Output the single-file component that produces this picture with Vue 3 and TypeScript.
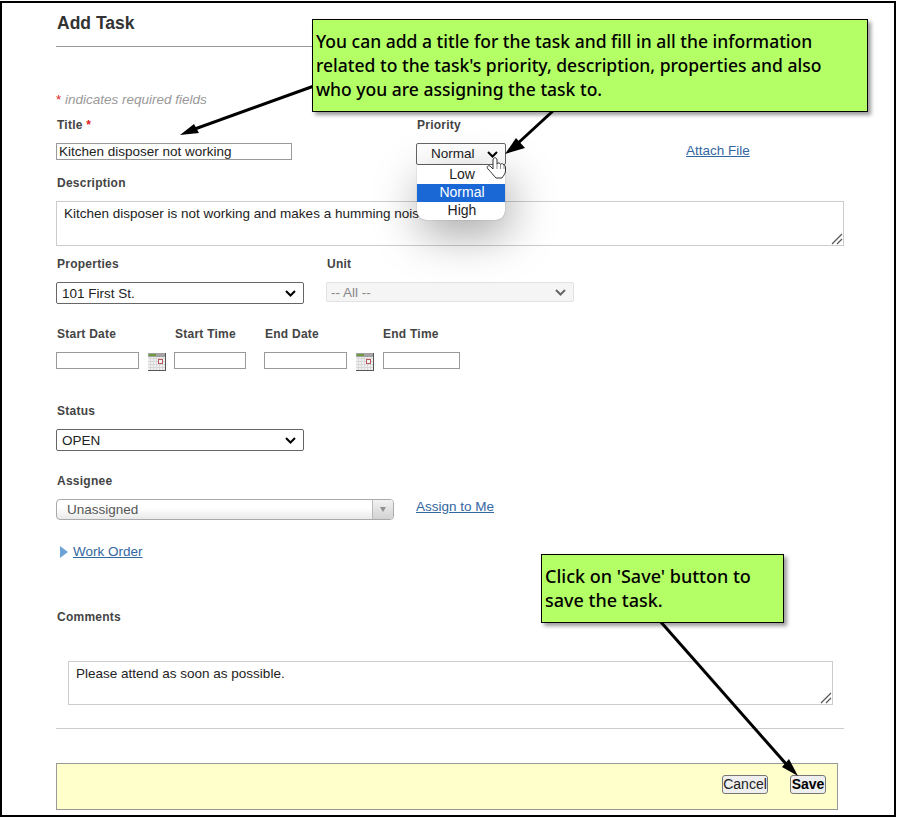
<script setup lang="ts">
const dateFields = [
  { label: 'Start Date', width: 83, calendar: true },
  { label: 'Start Time', width: 72, calendar: false },
  { label: 'End Date', width: 83, calendar: true },
  { label: 'End Time', width: 77, calendar: false },
]
const gridCells = [2, 5, 8, 11, 14]
</script>

<template>
  <div class="page">
    <main class="frame">
      <h1 class="title">Add Task</h1>
      <hr class="rule-dark" />
      <p class="required"><span class="star">*</span> indicates required fields</p>

      <section class="top-row">
        <div class="title-col">
          <label class="lab">Title <span class="star">*</span></label>
          <input class="text title-input" value="Kitchen disposer not working" />
        </div>
        <div class="priority-col">
          <label class="lab">Priority</label>
          <select class="sel priority">
            <option>Low</option>
            <option selected>Normal</option>
            <option>High</option>
          </select>
        </div>
        <a class="link attach" href="#">Attach File</a>
      </section>

      <label class="lab desc-lab">Description</label>
      <div class="area-wrap desc-wrap">
        <textarea class="area desc-area">Kitchen disposer is not working and makes a humming noise.</textarea>
        <svg class="grip" width="12" height="12" viewBox="0 0 12 12">
          <path d="M1 11L11 1M6 11L11 6" stroke="#555" stroke-width="1.2" fill="none" />
        </svg>
      </div>

      <section class="prop-row">
        <div>
          <label class="lab">Properties</label>
          <select class="sel"><option>101 First St.</option></select>
        </div>
        <div>
          <label class="lab">Unit</label>
          <select class="sel unit"><option>-- All --</option></select>
        </div>
      </section>

      <section class="date-row">
        <div v-for="f in dateFields" :key="f.label" class="date-cell">
          <label class="lab date-lab">{{ f.label }}</label>
          <div class="date-input">
            <input class="text" :style="{ width: f.width + 'px' }" />
            <svg v-if="f.calendar" class="cal" width="18" height="18" viewBox="0 0 18 18">
              <rect width="18" height="18" fill="#f0f0f0" />
              <rect width="17" height="4" fill="#a3a3a3" />
              <rect x="1" y="1" width="7" height="2" fill="#6f9a3c" />
              <path
                v-for="n in gridCells"
                :key="n"
                :d="`M${n + 0.5} 4V17M0 ${n + 3.5}H17`"
                stroke="#d8d8d8"
                fill="none"
              />
              <rect x="10.5" y="6.5" width="4" height="4" fill="#f4f4f4" stroke="#b9575c" />
              <path d="M17.5 0V18M0 17.5H18" stroke="#555" fill="none" />
            </svg>
          </div>
        </div>
      </section>

      <label class="lab status-lab">Status</label>
      <select class="sel"><option>OPEN</option></select>

      <label class="lab assignee-lab">Assignee</label>
      <div class="assignee-row">
        <div class="combo">
          <span class="combo-text">Unassigned</span>
          <span class="combo-btn"><i class="combo-arrow"></i></span>
        </div>
        <a class="link assign" href="#">Assign to Me</a>
      </div>

      <div class="work-order">
        <i class="tri"></i>
        <a class="link" href="#">Work Order</a>
      </div>

      <label class="lab comments-lab">Comments</label>
      <div class="area-wrap comment-wrap">
        <textarea class="area comment-area">Please attend as soon as possible.</textarea>
        <svg class="grip" width="12" height="12" viewBox="0 0 12 12">
          <path d="M1 11L11 1M6 11L11 6" stroke="#555" stroke-width="1.2" fill="none" />
        </svg>
      </div>

      <hr class="rule-light" />

      <footer class="bar">
        <button class="btn cancel">Cancel</button>
        <button class="btn save">Save</button>
      </footer>
    </main>

    <ul class="menu">
      <li>Low</li>
      <li class="active">Normal</li>
      <li class="last">High</li>
    </ul>

    <svg class="arrows" width="897" height="819" viewBox="0 0 897 819">
      <g stroke="#000" stroke-width="3" fill="none">
        <path d="M314 86L192 130" />
        <path d="M554 110L516 145" />
        <path d="M660 621L787 765" />
      </g>
      <polygon points="180,135 194,124 199,133" fill="#000" />
      <polygon points="505,154 516,138 525,148" fill="#000" />
      <polygon points="798,776 782,767 789,759" fill="#000" />
      <path
        d="M493 160C493 157 497 157 497 160V164C498 162.5 500 162.5 500.5 164.5C501.5 163 503.5 163.5 504 165.5C505 165 505.5 166 505.5 168V171C505.5 174 503 176 502 178H496C494 176 491 172 488 169C486 167 488 165 490 166L493 169Z"
        fill="#fff"
        stroke="#333"
        stroke-width="1"
      />
      <path d="M497 164V169M500.5 164.5V169M504 165.5V169" stroke="#555" stroke-width="0.7" fill="none" />
    </svg>

    <div class="callout callout-main">
      You can add a title for the task and fill in all the information related to the task's priority,
      description, properties and also who you are assigning the task to.
    </div>
    <div class="callout callout-save">Click on 'Save' button to save the task.</div>
  </div>
</template>

<style scoped>
.page {
  position: relative;
  width: 897px;
  height: 819px;
  overflow: hidden;
  font-family: "Liberation Sans", Arial, sans-serif;
  font-size: 13.5px;
  color: #222;
  background: #fff;
}
.frame {
  box-sizing: border-box;
  width: 896px;
  height: 816px;
  margin-top: 1px;
  padding: 10px 50px 0 54px;
  border: 2px solid #000;
}
.title {
  margin: 0;
  padding: 0 0 0 1px;
  height: 20px;
  font-size: 17.5px;
  line-height: 20px;
  font-weight: 700;
  color: #333;
}
.rule-dark,
.rule-light {
  height: 1px;
  margin: 13px 0 0;
  border: 0;
  background: #999;
}
.rule-light {
  margin-top: 23px;
  background: #ccc;
}
.required {
  margin: 45px 0 0;
  font-size: 13.5px;
  line-height: 16px;
  font-style: italic;
  color: #999;
}
.star {
  color: #d22;
  font-style: normal;
}
.lab {
  display: block;
  height: 16px;
  padding-left: 1px;
  font-size: 12px;
  line-height: 18px;
  font-weight: 700;
  letter-spacing: 0.25px;
  color: #444;
}
.top-row {
  display: flex;
  margin-top: 8px;
  height: 49px;
}
.title-col {
  width: 360px;
}
.priority-col {
  width: 270px;
}
.title-col .lab,
.priority-col .lab {
  margin-bottom: 11px;
}
.text {
  box-sizing: border-box;
  display: block;
  height: 17px;
  padding: 0 2px;
  margin: 0;
  border: 1px solid #999;
  border-radius: 0;
  outline: 0;
  background: #fff;
  font: 13.5px "Liberation Sans", Arial, sans-serif;
  color: #222;
}
.title-input {
  width: 236px;
}
.sel {
  display: block;
  box-sizing: border-box;
  width: 248px;
  height: 22px;
  padding: 0 0 0 5px;
  border: 1px solid #666;
  border-radius: 2px;
  appearance: none;
  background: #fff
    url("data:image/svg+xml,%3Csvg xmlns='http://www.w3.org/2000/svg' width='11' height='7'%3E%3Cpath d='M1 1l4.500 4.500L10 1' fill='none' stroke='%23000' stroke-width='2'/%3E%3C/svg%3E")
    no-repeat right 7px center;
  font: 13.5px "Liberation Sans", Arial, sans-serif;
  color: #222;
}
.priority {
  width: 90px;
  padding: 0 0 1px 14px;
}
.attach {
  display: block;
  margin-top: 27px;
  height: 16px;
  line-height: 16px;
}
.link {
  color: #33679f;
  text-decoration: underline;
}
.desc-lab {
  margin-top: 9px;
}
.area-wrap {
  position: relative;
}
.desc-wrap {
  width: 788px;
  margin-top: 11px;
}
.comment-wrap {
  width: 765px;
  margin: 37px 0 0 12px;
}
.grip {
  position: absolute;
  right: 1px;
  bottom: 1px;
}
.area {
  box-sizing: border-box;
  display: block;
  width: 100%;
  margin: 0;
  border: 1px solid #ccc;
  border-radius: 0;
  outline: 0;
  resize: none;
  background: transparent;
  font: 13.5px/16px "Liberation Sans", Arial, sans-serif;
  color: #222;
  overflow: hidden;
}
.desc-area {
  height: 45px;
  padding: 4px 7px;
}
.prop-row {
  display: grid;
  grid-template-columns: 270px 248px;
  margin-top: 9px;
}
.prop-row .lab {
  margin-bottom: 11px;
}
.unit {
  height: 20px;
  padding-left: 4px;
  border-color: #e2e2e2;
  background-color: #f5f5f5;
  background-image: url("data:image/svg+xml,%3Csvg xmlns='http://www.w3.org/2000/svg' width='11' height='7'%3E%3Cpath d='M1 1l4.500 4.500L10 1' fill='none' stroke='%23666' stroke-width='2'/%3E%3C/svg%3E");
  color: #888;
}
.date-row {
  display: grid;
  grid-template-columns: 118px 90px 119px 77px;
  margin-top: 21px;
}
.date-lab {
  margin-bottom: 11px;
}
.date-cell:last-child .date-lab {
  padding-left: 0;
}
.date-input {
  display: flex;
  align-items: flex-start;
  height: 17px;
}
.cal {
  margin: 1px 0 0 9px;
}
.status-lab {
  margin-top: 33px;
  margin-bottom: 11px;
}
.assignee-lab {
  margin-top: 21px;
  margin-bottom: 11px;
}
.assignee-row {
  display: flex;
  align-items: flex-start;
}
.combo {
  box-sizing: border-box;
  display: flex;
  width: 338px;
  height: 21px;
  border: 1px solid #aaa;
  border-radius: 4px;
  background: linear-gradient(#fff 40%, #e9e9e9);
  overflow: hidden;
}
.combo-text {
  flex: 1;
  padding-left: 10px;
  line-height: 19px;
  color: #555;
}
.combo-btn {
  display: flex;
  align-items: center;
  justify-content: center;
  width: 20px;
  margin-left: -4px;
  border-left: 1px solid #bbb;
  background: linear-gradient(#f2f2f2, #d2d2d2);
}
.combo-arrow {
  border-top: 5px solid #8f8f8f;
  border-left: 3px solid transparent;
  border-right: 3px solid transparent;
}
.assign {
  margin-left: 22px;
  line-height: 16px;
}
.work-order {
  display: flex;
  align-items: center;
  height: 16px;
  margin-top: 24px;
  line-height: 16px;
}
.tri {
  width: 0;
  height: 0;
  margin: -1px 5px 0 4px;
  border-left: 8px solid #6ea3d8;
  border-top: 6.5px solid transparent;
  border-bottom: 6.5px solid transparent;
}
.comments-lab {
  margin-top: 48px;
}
.comment-area {
  height: 44px;
  padding: 4px 7px;
}
.bar {
  box-sizing: border-box;
  display: flex;
  align-items: flex-start;
  width: 782px;
  height: 47px;
  margin-top: 34px;
  padding: 11px 11px 0 0;
  border: 1px solid #999;
  background: #ffc;
  justify-content: flex-end;
}
.btn {
  box-sizing: border-box;
  height: 19px;
  padding: 0;
  border: 1px solid #767676;
  border-radius: 3px;
  background: #efefef;
  font: 14px/17px "Liberation Sans", Arial, sans-serif;
  color: #222;
}
.cancel {
  width: 46px;
  margin-right: 22px;
}
.save {
  width: 36px;
  font-weight: 700;
  color: #000;
}
.menu {
  position: absolute;
  left: 417px;
  top: 165px;
  box-sizing: border-box;
  width: 88px;
  height: 55px;
  margin: 0;
  padding: 0;
  list-style: none;
  border-radius: 0 0 9px 9px;
  background: #fff;
  overflow: hidden;
  text-align: center;
  font-size: 14px;
  line-height: 18px;
  box-shadow: 0 0 1px rgba(0, 0, 0, 0.5), 4px 14px 46px rgba(0, 0, 0, 0.36);
}
.menu li {
  height: 18px;
  padding-left: 2px;
}
.menu .active {
  margin-top: 1px;
  line-height: 16px;
  background: #1a68d6;
  color: #fff;
}
.menu .last {
  line-height: 16px;
}
.arrows {
  position: absolute;
  left: 0;
  top: 0;
  pointer-events: none;
}
.callout {
  position: absolute;
  box-sizing: border-box;
  border: 1px solid #000;
  background: #b5ff66;
  color: #000;
  font-family: "Noto Sans", "Open Sans", sans-serif;
  font-weight: 500;
  line-height: 24px;
  box-shadow: 3px 3px 4px rgba(0, 0, 0, 0.4);
}
.callout-main {
  left: 312px;
  top: 19px;
  width: 556px;
  height: 93px;
  padding: 9px 30px 0 3px;
  font-size: 17.5px;
}
.callout-save {
  left: 541px;
  top: 554px;
  width: 243px;
  height: 69px;
  padding: 9px 20px 0 3px;
  font-size: 18px;
}
</style>

<style>
html,
body {
  margin: 0;
  background: #fff;
}
</style>
